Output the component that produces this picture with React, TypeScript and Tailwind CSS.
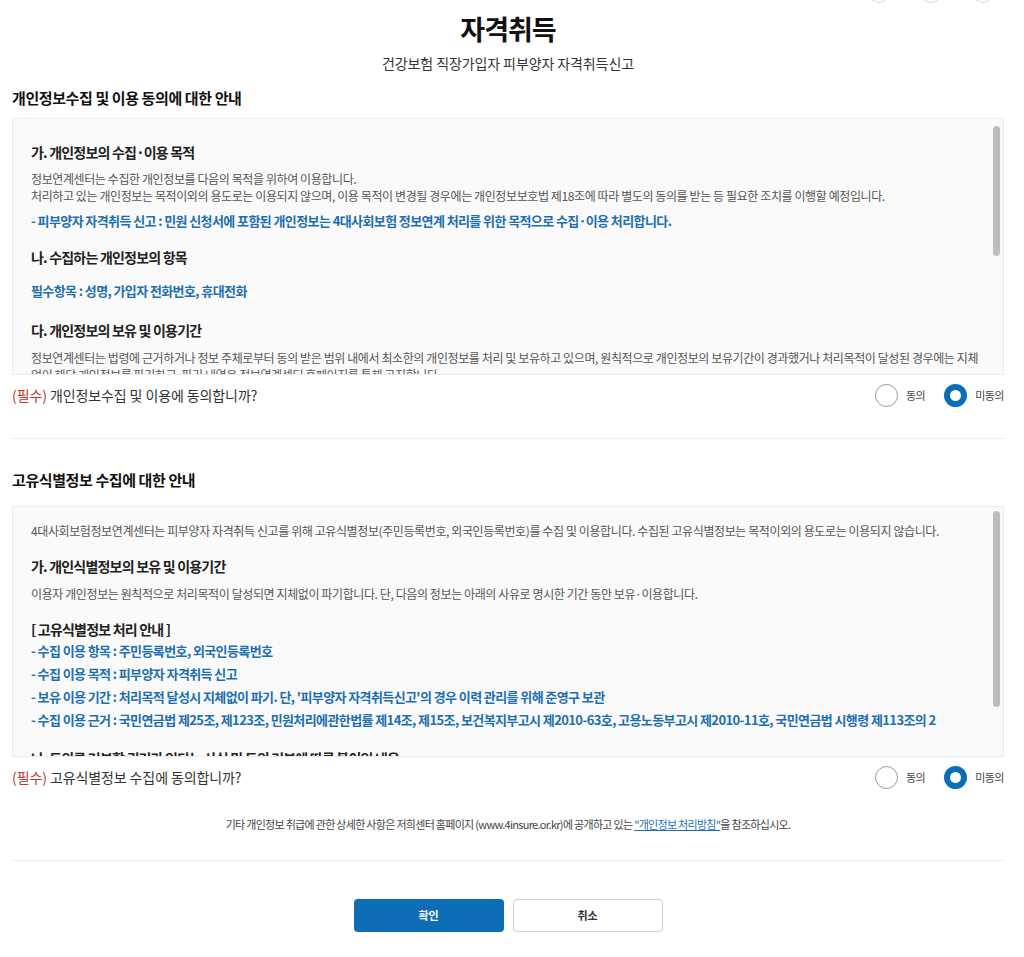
const font = "font-['Noto_Sans_CJK_KR','Noto_Sans',sans-serif]"

function Radio({ label, checked }: { label: string; checked?: boolean }) {
  return (
    <label className="flex items-center gap-[8px]">
      {checked ? (
        <span className="w-[23px] h-[23px] rounded-full border-[6px] border-[#0b6db7] bg-white" />
      ) : (
        <span className="w-[23px] h-[23px] rounded-full border border-[#9a9a9a] bg-white" />
      )}
      <span className="text-[11px] text-[#444] tracking-[-0.5px]">{label}</span>
    </label>
  )
}

function AgreeRow({ text }: { text: string }) {
  return (
    <div className="flex items-center justify-between h-[40px]">
      <p className="text-[14px] tracking-[-0.1px] text-[#333]">
        <span className="text-[#c0392b]">(필수)</span> {text}
      </p>
      <div className="flex items-center gap-[19px]">
        <Radio label="동의" />
        <Radio label="미동의" checked />
      </div>
    </div>
  )
}

function ScrollBox({ children, thumbTop, thumbHeight, height }: { children: React.ReactNode; thumbTop: string; thumbHeight: string; height: string }) {
  return (
    <div className={`relative ${height} overflow-hidden border border-[#ececec] bg-[#fafafa]`}>
      <div className="pl-[18px] pr-[22px]">{children}</div>
      <div className="absolute right-[2px] top-0 bottom-0 w-[9px]">
        <div className={`absolute left-[1px] w-[7px] rounded-full bg-[#bdbdbd] ${thumbTop} ${thumbHeight}`} />
      </div>
    </div>
  )
}

const h = "text-[14px] font-bold text-[#222] tracking-[-0.8px] leading-[20px]"
const body = "text-[12px] text-[#555] tracking-[-0.4px] leading-[17px]"
const blue = "text-[13px] font-bold text-[#1c6fb2] tracking-[-0.6px] leading-[20px]"

export default function App() {
  return (
    <div className={`${font} w-[1024px] min-h-[957px] bg-white text-[#333] pl-[12px] pr-[20px]`}>
      <div className="h-0 flex justify-end gap-[30px] pr-[10px] overflow-visible">
        {[...Array(3)].map((_, i) => (
          <div key={i} className="w-[22px] h-[22px] -mt-[19px] rounded-full border border-[#d8d8d8]" />
        ))}
      </div>

      <div className="pt-[12px] text-center">
        <h1 className="text-[27px] font-bold text-[#111] tracking-[-1px] leading-[34px]">자격취득</h1>
        <p className="mt-[8px] text-[14px] text-[#333] tracking-[-0.1px] leading-[18px]">건강보험 직장가입자 피부양자 자격취득신고</p>
      </div>

      <h2 className="mt-[16px] text-[15px] font-bold text-[#111] tracking-[-0.4px] leading-[20px]">개인정보수집 및 이용 동의에 대한 안내</h2>

      <div className="mt-[10px]">
        <ScrollBox height="h-[257px]" thumbTop="top-[7px]" thumbHeight="h-[130px]">
          <p className={`${h} pt-[23px]`}>가. 개인정보의 수집·이용 목적</p>
          <p className={`${body} mt-[8px]`}>정보연계센터는 수집한 개인정보를 다음의 목적을 위하여 이용합니다.</p>
          <p className={body}>처리하고 있는 개인정보는 목적이외의 용도로는 이용되지 않으며, 이용 목적이 변경될 경우에는 개인정보보호법 제18조에 따라 별도의 동의를 받는 등 필요한 조치를 이행할 예정입니다.</p>
          <p className={`${blue} mt-[7px]`}>- 피부양자 자격취득 신고 : 민원 신청서에 포함된 개인정보는 4대사회보험 정보연계 처리를 위한 목적으로 수집·이용 처리합니다.</p>
          <p className={`${h} mt-[16px]`}>나. 수집하는 개인정보의 항목</p>
          <p className={`${blue} mt-[14px]`}>필수항목 : 성명, 가입자 전화번호, 휴대전화</p>
          <p className={`${h} mt-[19px]`}>다. 개인정보의 보유 및 이용기간</p>
          <p className={`${body} mt-[9px]`}>정보연계센터는 법령에 근거하거나 정보 주체로부터 동의 받은 범위 내에서 최소한의 개인정보를 처리 및 보유하고 있으며, 원칙적으로 개인정보의 보유기간이 경과했거나 처리목적이 달성된 경우에는 지체없이 해당 개인정보를 파기하고, 파기 내역은 정보연계센터 홈페이지를 통해 공지합니다.</p>
        </ScrollBox>
      </div>

      <AgreeRow text="개인정보수집 및 이용에 동의합니까?" />

      <div className="mt-[23px] border-t border-[#ececec]" />

      <h2 className="mt-[31px] text-[15px] font-bold text-[#111] tracking-[-0.4px] leading-[20px]">고유식별정보 수집에 대한 안내</h2>

      <div className="mt-[16px]">
        <ScrollBox height="h-[251px]" thumbTop="top-[4px]" thumbHeight="h-[196px]">
          <p className={`${body} pt-[15px]`}>4대사회보험정보연계센터는 피부양자 자격취득 신고를 위해 고유식별정보(주민등록번호, 외국인등록번호)를 수집 및 이용합니다. 수집된 고유식별정보는 목적이외의 용도로는 이용되지 않습니다.</p>
          <p className={`${h} mt-[17px]`}>가. 개인식별정보의 보유 및 이용기간</p>
          <p className={`${body} mt-[9px]`}>이용자 개인정보는 원칙적으로 처리목적이 달성되면 지체없이 파기합니다. 단, 다음의 정보는 아래의 사유로 명시한 기간 동안 보유·이용합니다.</p>
          <p className={`${h} mt-[17px]`}>[ 고유식별정보 처리 안내 ]</p>
          <div className="text-[13px] font-bold text-[#1c6fb2] tracking-[-0.6px] leading-[23px]">
            <p>- 수집 이용 항목 : 주민등록번호, 외국인등록번호</p>
            <p>- 수집 이용 목적 : 피부양자 자격취득 신고</p>
            <p>- 보유 이용 기간 : 처리목적 달성시 지체없이 파기. 단, '피부양자 자격취득신고'의 경우 이력 관리를 위해 준영구 보관</p>
            <p>- 수집 이용 근거 : 국민연금법 제25조, 제123조, 민원처리에관한법률 제14조, 제15조, 보건복지부고시 제2010-63호, 고용노동부고시 제2010-11호, 국민연금법 시행령 제113조의 2</p>
          </div>
          <p className={`${h} mt-[17px]`}>나. 동의를 거부할 권리가 있다는 사실 및 동의 거부에 따른 불이익 내용</p>
        </ScrollBox>
      </div>

      <AgreeRow text="고유식별정보 수집에 동의합니까?" />

      <p className="mt-[20px] text-center text-[11px] text-[#444] tracking-[-0.7px] leading-[15px]">
        기타 개인정보 취급에 관한 상세한 사항은 저희센터 홈페이지 (www.4insure.or.kr)에 공개하고 있는{' '}
        <a className="text-[#1c6fb2] underline">"개인정보 처리방침"</a>을 참조하십시오.
      </p>

      <div className="mt-[28px] border-t border-[#ececec]" />

      <div className="mt-[38px] flex justify-center gap-[9px] pb-[24px]">
        <button className="w-[150px] h-[33px] rounded-[4px] bg-[#0d6db6] text-white text-[11px] font-bold">확인</button>
        <button className="w-[150px] h-[33px] rounded-[4px] border border-[#cfcfcf] bg-white text-[#333] text-[11px] font-bold">취소</button>
      </div>
    </div>
  )
}
